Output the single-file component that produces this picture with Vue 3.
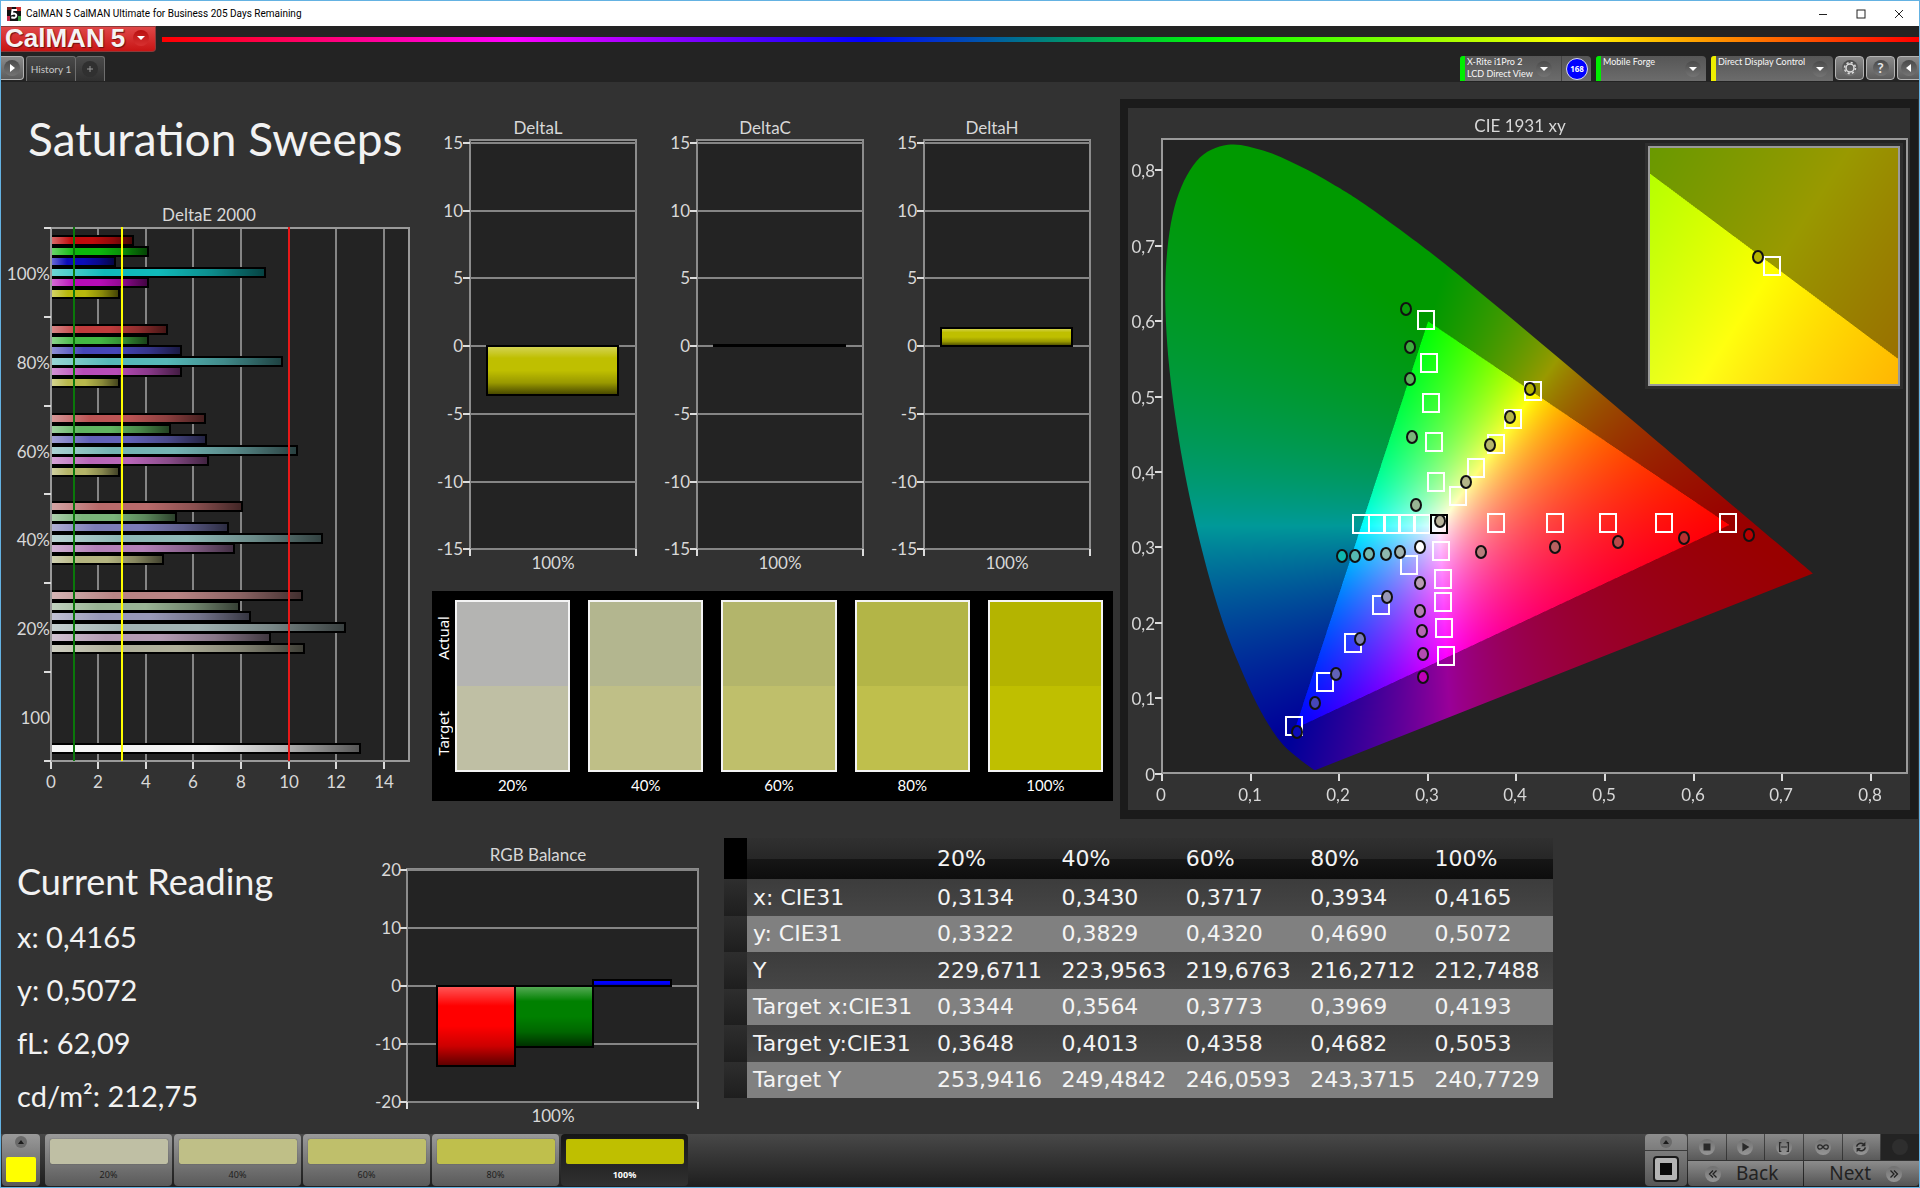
<script setup>
import { onMounted, ref } from 'vue'

const levels = ['20%', '40%', '60%', '80%', '100%']

/* DeltaE 2000 bar chart */
const deX = (v) => Math.round(50.5 + v * 23.8)
const deY = (i) => Math.round(228 + i * 88.8)
const slot = 10.6
const deltaE = [
  { label: '100%', values: [3.45, 4.1, 2.71, 9.03, 4.1, 2.89], colors: ['#c00c0c', '#0cb80c', '#0c0cb8', '#10baba', '#b80cb8', '#b8b80c'] },
  { label: '80%', values: [4.88, 4.1, 5.5, 9.71, 5.5, 2.88], colors: ['#c03c3c', '#44b844', '#4646b8', '#56b8b8', '#b84cb8', '#b8b84c'] },
  { label: '60%', values: [6.48, 5.02, 6.52, 10.34, 6.6, 2.89], colors: ['#bc5454', '#60b460', '#6262b8', '#74b4b4', '#b866b8', '#b4b468'] },
  { label: '40%', values: [8.06, 5.27, 7.46, 11.42, 7.71, 4.71], colors: ['#b86a6a', '#7ab47a', '#7c7cb8', '#8eb8b6', '#b480b8', '#b4b480'] },
  { label: '20%', values: [10.55, 7.92, 8.37, 12.39, 9.24, 10.64], colors: ['#b88484', '#98b494', '#9898b8', '#a0b2b2', '#b49cb4', '#b0b09a'] },
  { label: '100', values: [null, null, null, null, null, null, 12.99], colors: ['', '', '', '', '', '', '#f2f2f2'] },
]
const deBars = deltaE.flatMap((g, gi) =>
  g.values
    .map((v, i) => ({ v, y: Math.round(deY(gi) + 8 + i * slot), color: g.colors[i], key: gi + '-' + i }))
    .filter((b) => b.v !== null)
)

/* DeltaL / DeltaC / DeltaH charts */
const dY = (v) => Math.round(346 - v * 13.55)
const deltaTicks = [15, 10, 5, 0, -5, -10, -15]
const deltas = [
  { name: 'DeltaL', top: 0, bottom: -3.6 },
  { name: 'DeltaC', top: 0.1, bottom: 0 },
  { name: 'DeltaH', top: 1.3, bottom: 0 },
]

/* Colour swatches */
const swatches = [
  { label: '20%', actual: '#b4b4b2', target: '#bfbfa4' },
  { label: '40%', actual: '#b3b68f', target: '#bfbf87' },
  { label: '60%', actual: '#b3b56b', target: '#bfbf6b' },
  { label: '80%', actual: '#b3b547', target: '#bfbf4c' },
  { label: '100%', actual: '#b4b400', target: '#bfbf00' },
]

/* RGB balance */
const rY = (v) => Math.round(986 - v * 5.8)
const rgbBars = [
  { x: 437, top: 0, bottom: -13.8, color: '#ff0000' },
  { x: 515, top: 0, bottom: -10.6, color: '#008000' },
  { x: 593, top: 1, bottom: 0, color: '#0000ff' },
]

/* Readings */
const readings = ['x: 0,4165', 'y: 0,5072', 'fL: 62,09', 'cd/m²: 212,75']
const rows = [
  ['x: CIE31', '0,3134', '0,3430', '0,3717', '0,3934', '0,4165'],
  ['y: CIE31', '0,3322', '0,3829', '0,4320', '0,4690', '0,5072'],
  ['Y', '229,6711', '223,9563', '219,6763', '216,2712', '212,7488'],
  ['Target x:CIE31', '0,3344', '0,3564', '0,3773', '0,3969', '0,4193'],
  ['Target y:CIE31', '0,3648', '0,4013', '0,4358', '0,4682', '0,5053'],
  ['Target Y', '253,9416', '249,4842', '246,0593', '243,3715', '240,7729'],
]

/* CIE diagram */
const view = { x: 1128, y: 108, w: 782, h: 702 }
const cX = (v) => 1162 + v * 886
const cY = (v) => 773.5 - v * 754
const cieTicks = [0, 1, 2, 3, 4, 5, 6, 7, 8]
const tickText = (n) => (n ? '0,' + n : '0')
const targets = [
  [1426, 320], [1429, 363], [1431, 403], [1434, 442], [1436, 482],
  [1533, 391], [1513, 419], [1496, 444], [1476, 468], [1458, 496],
  [1361, 524], [1377, 524], [1392, 524], [1407, 524], [1422, 524],
  [1496, 523], [1555, 523], [1608, 523], [1664, 523], [1728, 523],
  [1441, 551], [1443, 579], [1443, 602], [1444, 628], [1446, 656],
  [1409, 565], [1381, 605], [1353, 643], [1325, 682], [1294, 726],
]
const measured = [
  [1406, 309, '#0a9a0a'], [1410, 347, '#3fae3f'], [1410, 379, '#5cb25c'], [1412, 437, '#7ab47a'], [1416, 505, '#98b494'],
  [1530, 389, '#b4b400'], [1510, 417, '#b4b548'], [1490, 445, '#b4b56b'], [1466, 482, '#b4b688'], [1440, 521, '#b8b49c'],
  [1420, 547, '#ffffff'],
  [1342, 556, '#10b8b0'], [1355, 556, '#56b8b0'], [1369, 554, '#74b8b0'], [1386, 554, '#8eb8b0'], [1400, 552, '#a0b4b0'],
  [1481, 552, '#b87c7c'], [1555, 547, '#b86060'], [1618, 542, '#b84848'], [1684, 538, '#b83030'], [1749, 535, '#b80000'],
  [1420, 583, '#b89cb4'], [1420, 611, '#b480b0'], [1422, 631, '#b466b0'], [1423, 654, '#b44cb0'], [1423, 677, '#c000b8'],
  [1387, 597, '#9898b8'], [1360, 639, '#7c7cb8'], [1336, 674, '#6262b8'], [1315, 703, '#4646b8'], [1297, 732, '#0c0cb8'],
]
const inset = { x: 1649, y: 147, w: 250, h: 238, cx: 0.4193, cy: 0.5053 }

const locus = [
  [0.1741, 0.005], [0.1714, 0.0051], [0.1644, 0.0109], [0.1566, 0.0177], [0.144, 0.0297], [0.1355, 0.0399],
  [0.1241, 0.0578], [0.1096, 0.0868], [0.0913, 0.1327], [0.0687, 0.2007], [0.0454, 0.295], [0.0235, 0.4127],
  [0.0082, 0.5384], [0.0039, 0.6548], [0.0139, 0.7502], [0.0389, 0.812], [0.0743, 0.8338], [0.1142, 0.8262],
  [0.1547, 0.8059], [0.1929, 0.7816], [0.2296, 0.7543], [0.3016, 0.6923], [0.3731, 0.6245], [0.4441, 0.5547],
  [0.5125, 0.4866], [0.5752, 0.4242], [0.627, 0.3725], [0.6658, 0.334], [0.6915, 0.3083], [0.719, 0.2809],
  [0.7347, 0.2653],
]

/* Brightest RGB colour with chromaticity (x, y); dimmed outside the gamut */
function chroma(x, y) {
  const X = x / y
  const Z = (1 - x - y) / y
  let c = [
    3.2406 * X - 1.5372 - 0.4986 * Z,
    -0.9689 * X + 1.8758 + 0.0415 * Z,
    0.0557 * X - 0.204 + 1.057 * Z,
  ]
  const dim = Math.min(...c) < 0 ? 0.6 : 1
  c = c.map((v) => Math.max(v, 0))
  const m = Math.max(...c)
  return c.map((v) => (v / m) * 255 * dim)
}

function field(w, h, toXY) {
  const k = 2
  const cv = document.createElement('canvas')
  cv.width = w * k
  cv.height = h * k
  const ctx = cv.getContext('2d')
  const img = ctx.createImageData(cv.width, cv.height)
  let o = 0
  for (let j = 0; j < cv.height; j++) {
    for (let i = 0; i < cv.width; i++) {
      const [x, y] = toXY(i / k, j / k)
      const c = chroma(x, Math.max(y, 0.001))
      img.data[o] = c[0]
      img.data[o + 1] = c[1]
      img.data[o + 2] = c[2]
      img.data[o + 3] = 255
      o += 4
    }
  }
  ctx.putImageData(img, 0, 0)
  return cv
}

const canvas = ref(null)
onMounted(() => {
  const ctx = canvas.value.getContext('2d')
  ctx.translate(-view.x, -view.y)
  ctx.fillStyle = '#232323'
  ctx.fillRect(1162, 139, 745, 634)

  const p = locus.map(([x, y]) => [cX(x), cY(y)])
  ctx.save()
  ctx.beginPath()
  ctx.moveTo(...p[0])
  for (let i = 0; i < p.length - 1; i++) {
    const a = p[Math.max(i - 1, 0)]
    const b = p[i]
    const c = p[i + 1]
    const d = p[Math.min(i + 2, p.length - 1)]
    ctx.bezierCurveTo(b[0] + (c[0] - a[0]) / 6, b[1] + (c[1] - a[1]) / 6, c[0] - (d[0] - b[0]) / 6, c[1] - (d[1] - b[1]) / 6, c[0], c[1])
  }
  ctx.closePath()
  ctx.clip()
  const main = field(664, 634, (i, j) => [i / 886, (634.5 - j) / 754])
  ctx.drawImage(main, 1162, 139, 664, 634)
  ctx.restore()

  ctx.fillStyle = '#2e2e2e'
  ctx.fillRect(inset.x - 4, inset.y - 4, inset.w + 8, inset.h + 8)
  const zoomed = field(inset.w, inset.h, (i, j) => [
    inset.cx + (i - inset.w / 2) / 5000,
    inset.cy - (j - inset.h / 2) / 4700,
  ])
  ctx.drawImage(zoomed, inset.x, inset.y, inset.w, inset.h)
})
</script>

<template>
  <div class="window">
    <header class="titlebar">
      <svg class="appicon" viewBox="0 0 14 14">
        <rect width="14" height="14" fill="#111" />
        <path d="M0 0h5v3H0z" fill="#7a1c1c" />
        <path d="M9 0h5v4H9z" fill="#d03030" />
        <path d="M0 9h3v5H0z" fill="#c22a4a" />
        <path d="M11 9h3v5h-3z" fill="#3aa044" />
        <path d="M10 3H5.500L5 7c3-1 4.500 0 4.300 2-.2 1.700-2.500 2.300-5 1.300" fill="none" stroke="#fff" stroke-width="2" />
      </svg>
      <span class="caption">CalMAN 5 CalMAN Ultimate for Business 205 Days Remaining</span>
      <div class="controls">
        <button aria-label="Minimize"><svg viewBox="0 0 10 10"><path d="M1 5.500h8" stroke="#222" /></svg></button>
        <button aria-label="Maximize"><svg viewBox="0 0 10 10"><rect x="1" y="1" width="8" height="8" fill="none" stroke="#222" /></svg></button>
        <button aria-label="Close"><svg viewBox="0 0 10 10"><path d="M1 1l8 8M9 1l-8 8" stroke="#222" /></svg></button>
      </div>
    </header>

    <div class="brandrow">
      <button class="logo">
        <span class="brand">CalMAN</span><span class="brand">5</span>
        <span class="round red"><svg viewBox="0 0 16 16"><path d="M4 6h8l-4 4z" fill="#fff" /></svg></span>
      </button>
      <div class="rainbow"></div>
    </div>

    <nav class="toolbar">
      <button class="square first" aria-label="Open panel">
        <span class="round"><svg viewBox="0 0 16 16"><path d="M6 4l5 4-5 4z" fill="#fff" /></svg></span>
      </button>
      <button class="tab">History 1</button>
      <button class="tab plus" aria-label="Add tab">
        <span class="round dark"><svg viewBox="0 0 16 16"><path d="M8 5v6M5 8h6" stroke="#999" /></svg></span>
      </button>
      <div class="spacer"></div>
      <div class="device meter">
        <i class="status green"></i>
        <span class="name">X-Rite i1Pro 2<br />LCD Direct View</span>
        <button class="round" aria-label="Meter menu"><svg viewBox="0 0 16 16"><path d="M4 6h8l-4 4z" fill="#fff" /></svg></button>
        <span class="badgebox"><span class="badge">168</span></span>
      </div>
      <div class="device source">
        <i class="status green"></i>
        <span class="name">Mobile Forge</span>
        <button class="round" aria-label="Source menu"><svg viewBox="0 0 16 16"><path d="M4 6h8l-4 4z" fill="#fff" /></svg></button>
      </div>
      <div class="device display">
        <i class="status yellow"></i>
        <span class="name">Direct Display Control</span>
        <button class="round" aria-label="Display menu"><svg viewBox="0 0 16 16"><path d="M4 6h8l-4 4z" fill="#fff" /></svg></button>
      </div>
      <div class="tools">
        <button class="square" aria-label="Settings">
          <span class="round"><svg viewBox="0 0 16 16"><circle cx="8" cy="8" r="4" fill="none" stroke="#ddd" stroke-width="1.500" /><circle cx="8" cy="8" r="5.500" fill="none" stroke="#ddd" stroke-width="1.500" stroke-dasharray="2.160 2.160" /></svg></span>
        </button>
        <button class="square help" aria-label="Help"><span class="round">?</span></button>
        <button class="square last" aria-label="Collapse">
          <span class="round"><svg viewBox="0 0 16 16"><path d="M10 4L5 8l5 4z" fill="#fff" /></svg></span>
        </button>
      </div>
    </nav>

    <main>
      <section class="upper">
        <div class="sweeps">
          <h1>Saturation Sweeps</h1>
          <svg class="chart" viewBox="1 200 431 600">
            <defs>
              <linearGradient id="shadeH" x1="0" x2="1" y1="0" y2="0">
                <stop offset="0" stop-color="#fff" stop-opacity=".4" />
                <stop offset=".25" stop-color="#fff" stop-opacity="0" />
                <stop offset=".5" stop-color="#000" stop-opacity="0" />
                <stop offset=".75" stop-color="#000" stop-opacity=".25" />
                <stop offset="1" stop-color="#000" stop-opacity=".65" />
              </linearGradient>
              <linearGradient id="shadeV" x1="0" x2="0" y1="0" y2="1">
                <stop offset="0" stop-color="#fff" stop-opacity=".35" />
                <stop offset=".25" stop-color="#fff" stop-opacity="0" />
                <stop offset=".5" stop-color="#000" stop-opacity="0" />
                <stop offset=".75" stop-color="#000" stop-opacity=".2" />
                <stop offset="1" stop-color="#000" stop-opacity=".65" />
              </linearGradient>
            </defs>
            <text x="209" y="221" text-anchor="middle">DeltaE 2000</text>
            <rect x="51" y="228" width="358" height="533" fill="#232323" />
            <line v-for="v in [2, 4, 6, 8, 10, 12, 14]" :key="v" :x1="deX(v)" :x2="deX(v)" y1="228" y2="761" class="grid" />
            <g v-for="b in deBars" :key="b.key">
              <rect x="51" :y="b.y" :width="deX(b.v) - 51" height="9" :fill="b.color" />
              <rect x="51" :y="b.y" :width="deX(b.v) - 51" height="9" fill="url(#shadeH)" stroke="#000" stroke-width="2" />
            </g>
            <rect x="51" y="228" width="358" height="533" class="frame" />
            <line v-for="i in 7" :key="i" x1="44" x2="51" :y1="deY(i - 1)" :y2="deY(i - 1)" class="tick" />
            <line v-for="v in [0, 2, 4, 6, 8, 10, 12, 14]" :key="'t' + v" :x1="deX(v)" :x2="deX(v)" y1="762" y2="769" class="tick" />
            <line :x1="deX(1)" :x2="deX(1)" y1="227" y2="761" stroke="#0a780a" stroke-width="2" />
            <line :x1="deX(3)" :x2="deX(3)" y1="227" y2="761" stroke="#ff0" stroke-width="2" />
            <line :x1="deX(10)" :x2="deX(10)" y1="227" y2="761" stroke="#e81818" stroke-width="2" />
            <text v-for="(g, i) in deltaE" :key="g.label + i" x="50" :y="deY(i) + 52" text-anchor="end">{{ g.label }}</text>
            <text v-for="v in [0, 2, 4, 6, 8, 10, 12, 14]" :key="'l' + v" :x="deX(v)" y="788" text-anchor="middle">{{ v }}</text>
          </svg>
        </div>

        <div class="middle">
          <div class="deltas">
            <svg v-for="d in deltas" :key="d.name" class="chart" viewBox="0 82 227 509">
              <text x="106" y="134" text-anchor="middle">{{ d.name }}</text>
              <rect x="38" y="140" width="166" height="409" class="plot" />
              <g v-for="t in deltaTicks" :key="t">
                <line x1="38" x2="204" :y1="dY(t)" :y2="dY(t)" class="grid" />
                <line x1="31" x2="38" :y1="dY(t)" :y2="dY(t)" class="tick" />
                <text x="31" :y="dY(t) + 6" text-anchor="end">{{ t }}</text>
              </g>
              <line x1="38" x2="38" y1="549" y2="556" class="tick" />
              <line x1="204" x2="204" y1="549" y2="556" class="tick" />
              <rect x="55" :y="dY(d.top)" width="131" :height="dY(d.bottom) - dY(d.top)" fill="#bfbf00" />
              <rect x="55" :y="dY(d.top)" width="131" :height="dY(d.bottom) - dY(d.top)" fill="url(#shadeV)" stroke="#000" stroke-width="2" />
              <text x="121" y="569" text-anchor="middle">100%</text>
            </svg>
          </div>
          <div class="swatches">
            <div class="side"><span>Actual</span><span>Target</span></div>
            <figure v-for="s in swatches" :key="s.label">
              <div class="sample">
                <div :style="{ background: s.actual }"></div>
                <div :style="{ background: s.target }"></div>
              </div>
              <figcaption>{{ s.label }}</figcaption>
            </figure>
          </div>
        </div>

        <div class="cie">
          <canvas ref="canvas" :width="view.w" :height="view.h"></canvas>
          <svg class="chart" :viewBox="`${view.x} ${view.y} ${view.w} ${view.h}`">
            <text x="1520" y="132" text-anchor="middle">CIE 1931 xy</text>
            <rect x="1162" y="139" width="745" height="634" class="frame" />
            <g v-for="n in cieTicks" :key="n">
              <line x1="1155" x2="1162" :y1="Math.round(cY(n / 10))" :y2="Math.round(cY(n / 10))" class="tick" />
              <line :x1="Math.round(cX(n / 10))" :x2="Math.round(cX(n / 10))" y1="774" y2="781" class="tick" />
              <text x="1155" :y="Math.round(cY(n / 10)) + 7" text-anchor="end">{{ tickText(n) }}</text>
              <text :x="Math.round(cX(n / 10)) - 1" y="801" text-anchor="middle">{{ tickText(n) }}</text>
            </g>
            <rect v-for="(t, i) in targets" :key="'s' + i" :x="t[0] - 8" :y="t[1] - 9" width="16" height="18" class="target" />
            <rect x="1431" y="515" width="16" height="18" class="target white" />
            <ellipse v-for="(m, i) in measured" :key="'m' + i" :cx="m[0]" :cy="m[1]" rx="5" ry="6" :fill="m[2]" class="dot" />
            <rect :x="inset.x" :y="inset.y" :width="inset.w" :height="inset.h" class="frame" />
            <rect x="1764" y="257" width="16" height="18" class="target" />
            <ellipse cx="1758" cy="257" rx="5" ry="6" fill="#b4b400" class="dot" />
          </svg>
        </div>
      </section>

      <section class="lower">
        <div class="reading">
          <h2>Current Reading</h2>
          <p v-for="r in readings" :key="r">{{ r }}</p>
        </div>

        <svg class="chart" viewBox="362 819 362 314">
          <text x="538" y="861" text-anchor="middle">RGB Balance</text>
          <rect x="407" y="869" width="291" height="233" class="plot" />
          <g v-for="t in [20, 10, 0, -10, -20]" :key="t">
            <line x1="407" x2="698" :y1="rY(t)" :y2="rY(t)" class="grid" />
            <line x1="400" x2="407" :y1="rY(t)" :y2="rY(t)" class="tick" />
            <text x="401" :y="rY(t) + 6" text-anchor="end">{{ t }}</text>
          </g>
          <line x1="407" x2="407" y1="1102" y2="1109" class="tick" />
          <line x1="698" x2="698" y1="1102" y2="1109" class="tick" />
          <g v-for="b in rgbBars" :key="b.color">
            <rect :x="b.x" :y="rY(b.top)" width="78" :height="rY(b.bottom) - rY(b.top)" :fill="b.color" />
            <rect :x="b.x" :y="rY(b.top)" width="78" :height="rY(b.bottom) - rY(b.top)" fill="url(#shadeV)" stroke="#000" stroke-width="2" />
          </g>
          <text x="553" y="1122" text-anchor="middle">100%</text>
        </svg>

        <table>
          <colgroup>
            <col class="c-mark" /><col class="c-label" /><col v-for="l in levels" :key="l" />
          </colgroup>
          <thead>
            <tr><td></td><td></td><th v-for="l in levels" :key="l" scope="col">{{ l }}</th></tr>
          </thead>
          <tbody>
            <tr v-for="r in rows" :key="r[0]">
              <td></td>
              <th scope="row">{{ r[0] }}</th>
              <td v-for="(v, i) in r.slice(1)" :key="i">{{ v }}</td>
            </tr>
          </tbody>
        </table>
      </section>
    </main>

    <footer>
      <button class="current" aria-label="Current pattern">
        <span class="up"><svg viewBox="0 0 12 12"><path d="M3 8l3-4 3 4z" fill="#1c1c1c" /></svg></span>
        <span class="color"></span>
      </button>
      <button v-for="s in swatches" :key="s.label" class="pattern" :class="{ active: s.label === '100%' }">
        <span class="color" :style="{ background: s.target }"></span>
        {{ s.label }}
      </button>
      <div class="spacer"></div>
      <div class="mode">
        <button aria-label="More"><span class="up"><svg viewBox="0 0 12 12"><path d="M3 8l3-4 3 4z" fill="#1c1c1c" /></svg></span></button>
        <button aria-label="Pattern window"><svg class="win" viewBox="0 0 26 26"><rect x="1" y="1" width="24" height="24" rx="3" fill="#b4b4b4" stroke="#1a1a1a" stroke-width="2" /><rect x="7" y="7" width="12" height="12" fill="#0a0a0a" /></svg></button>
      </div>
      <div class="transport">
        <div class="keys">
          <button aria-label="Stop"><span class="disc"><svg viewBox="0 0 16 16"><rect x="4" y="4" width="8" height="8" fill="#2a2a2a" /></svg></span></button>
          <button aria-label="Play"><span class="disc"><svg viewBox="0 0 16 16"><path d="M5 3l8 5-8 5z" fill="#2a2a2a" /></svg></span></button>
          <button aria-label="Range"><span class="disc"><svg viewBox="0 0 16 16"><path d="M5 3H3v10h2M11 3h2v10h-2" fill="none" stroke="#2a2a2a" stroke-width="1.500" /><path d="M5 8h6" stroke="#2a2a2a" stroke-width="1.500" stroke-dasharray="1.500 .75" /></svg></span></button>
          <button aria-label="Continuous"><span class="disc"><svg viewBox="0 0 16 16"><path d="M8 8C6.500 6 5.500 5.500 4.500 5.500a2.500 2.500 0 0 0 0 5C5.500 10.500 6.500 10 8 8s2.500-2.500 3.500-2.500a2.500 2.500 0 0 1 0 5C10.500 10.500 9.500 10 8 8z" fill="none" stroke="#2a2a2a" stroke-width="1.500" /></svg></span></button>
          <button aria-label="Repeat"><span class="disc"><svg viewBox="0 0 16 16"><path d="M3 7.500C3.500 4 8 2.500 11 5M13 8.500c-.5 3.500-5 5-8 2.500" fill="none" stroke="#2a2a2a" stroke-width="1.800" /><path d="M13 2v5H8zM3 14V9h5z" fill="#2a2a2a" /></svg></span></button>
          <button class="off" aria-label="Unavailable" disabled><span class="disc"></span></button>
        </div>
        <div class="steps">
          <button><span class="disc"><svg viewBox="0 0 16 16"><path d="M8 4L4 8l4 4M12 4L8 8l4 4" fill="none" stroke="#222" stroke-width="1.500" /></svg></span>Back</button>
          <button class="next">Next<span class="disc"><svg viewBox="0 0 16 16"><path d="M4 4l4 4-4 4M8 4l4 4-4 4" fill="none" stroke="#222" stroke-width="1.500" /></svg></span></button>
        </div>
      </div>
    </footer>
  </div>
</template>

<style>
body {
  margin: 0;
  background: #323232;
}
</style>

<style scoped>
.window {
  box-sizing: border-box;
  display: flex;
  flex-direction: column;
  min-height: 100vh;
  min-width: 1200px;
  border: 1px solid #64b2e2;
  background: #323232;
  color: #e6e6e6;
  font-family: Lato, "Liberation Sans", sans-serif;
}
.window * {
  box-sizing: border-box;
}
button {
  margin: 0;
  padding: 0;
  border: 0;
  background: none;
  color: inherit;
  font: inherit;
}
button svg,
span svg {
  display: block;
}
.spacer {
  flex: 1;
}

/* title bar */
.titlebar {
  display: flex;
  align-items: center;
  height: 25px;
  padding: 0 1px 0 6px;
  background: #fff;
  color: #000;
}
.appicon {
  width: 14px;
  height: 14px;
}
.caption {
  flex: 1;
  margin-left: 5px;
  padding-bottom: 1px;
  font-family: Roboto, sans-serif;
  font-size: 10px;
}
.controls {
  display: flex;
}
.controls button {
  display: grid;
  place-items: center;
  width: 38px;
  height: 24px;
}
.controls svg {
  width: 10px;
  height: 10px;
}

/* brand row */
.brandrow {
  display: flex;
  align-items: flex-start;
  height: 30px;
  gap: 6px;
  background: #232323;
}
.logo {
  display: flex;
  align-items: center;
  gap: 6px;
  width: 155px;
  height: 26px;
  padding: 0 0 3px 4px;
  border: 1px solid #8c3a3a;
  border-width: 1px 1px 1px 0;
  border-radius: 0 0 4px 0;
  background: linear-gradient(#e04848, #c81414);
  color: #f4f4f4;
  font-family: "Liberation Sans", Arial, sans-serif;
  font-size: 26px;
  font-weight: bold;
  line-height: 22px;
}
.brand {
  text-shadow: 1px 1px 1px #6a1010;
}
.round {
  display: grid;
  flex: none;
  place-items: center;
  width: 16px;
  height: 16px;
  border-radius: 50%;
  background: linear-gradient(#4a4a4a, #747474);
}
.round svg {
  width: 16px;
  height: 16px;
}
.round.red {
  margin-left: 2px;
  background: linear-gradient(#b81010, #d83030);
}
.round.dark {
  background: #303030;
}
.rainbow {
  flex: 1;
  height: 5px;
  margin-top: 11px;
  background: linear-gradient(90deg, #f00, #f0f 20%, #00f 40%, #0f0 60%, #ff0 80%, #f00);
}

/* toolbar */
.toolbar {
  display: flex;
  height: 26px;
  background: #232323;
  font-size: 10px;
}
.square {
  display: grid;
  place-items: center;
  width: 29px;
  height: 24px;
  border: 1px solid #b4b4b4;
  border-radius: 4px;
  background: linear-gradient(#8a8a8a, #5c5c5c);
}
.square.first {
  width: 23px;
  margin-right: 2px;
  border-left: 0;
  border-radius: 0 4px 4px 0;
}
.square.last {
  width: 22px;
  border-right: 0;
  border-radius: 4px 0 0 4px;
}
.square.help {
  font-size: 14px;
  font-weight: bold;
  line-height: 16px;
}
.tab {
  width: 50px;
  height: 25px;
  border: 1px solid #6e6e6e;
  border-bottom: 0;
  border-radius: 3px 3px 0 0;
  background: linear-gradient(#4a4a4a, #303030);
  color: #c8c8c8;
}
.tab.plus {
  display: grid;
  place-items: center;
  width: 29px;
  border-left: 0;
}
.device {
  display: flex;
  align-items: center;
  height: 25px;
  margin-right: 5px;
  padding-right: 5px;
  border-radius: 4px 4px 0 0;
  background: linear-gradient(#565656, #6c6c6c);
  color: #f8f8f8;
  line-height: 12px;
}
.device.meter {
  width: 131px;
  padding-right: 0;
}
.device.source {
  width: 110px;
}
.device.display {
  width: 122px;
  margin-right: 2px;
}
.status {
  flex: none;
  width: 5px;
  height: 25px;
  border-radius: 3px 0 0 0;
}
.status.green {
  background: #0e0;
}
.status.yellow {
  background: #ee0;
}
.name {
  flex: 1;
  align-self: flex-start;
  min-width: 0;
  padding-left: 2px;
  white-space: nowrap;
  font-size: 9px;
}
.badgebox {
  display: grid;
  place-items: center;
  width: 30px;
  height: 25px;
  margin-left: 9px;
  padding-left: 1px;
  border-left: 1px solid #444;
}
.badge {
  width: 22px;
  height: 22px;
  border: 1px solid #dde;
  border-radius: 50%;
  background: #00f;
  color: #fff;
  font-family: "Noto Sans", sans-serif;
  font-size: 8px;
  font-weight: bold;
  line-height: 20px;
  text-align: center;
}
.tools {
  display: flex;
  gap: 2px;
}

/* charts */
.chart {
  display: block;
  width: 100%;
  height: auto;
}
.chart text {
  fill: #d8d8d8;
  font-size: 17px;
}
.plot {
  fill: #232323;
  stroke: #8c8c8c;
  stroke-width: 2;
}
.frame {
  fill: none;
  stroke: #9a9a9a;
  stroke-width: 2;
}
.grid {
  stroke: #858585;
  stroke-width: 2;
}
.tick {
  stroke: #dcdcdc;
  stroke-width: 2;
}
.target {
  fill: none;
  stroke: #fff;
  stroke-width: 2;
}
.target.white {
  fill: #fff;
  fill-opacity: 0.5;
  stroke: #000;
}
.dot {
  stroke: #111;
  stroke-width: 2;
}

main {
  flex: 1;
  padding-right: 1px;
}
.upper {
  display: grid;
  grid-template-columns: 431fr 681fr 805fr;
  align-items: start;
}
h1,
h2,
p {
  margin: 0;
  font-weight: normal;
}
h1 {
  padding: 30px 0 34px 27px;
  color: #f2f2f2;
  font-size: 46px;
  line-height: 54px;
  white-space: nowrap;
}
.deltas {
  display: grid;
  grid-template-columns: repeat(3, 1fr);
}
.swatches {
  display: flex;
  gap: 18px;
  height: 210px;
  padding: 9px 10px 9px 3px;
  background: #000;
  color: #fff;
}
.side {
  display: flex;
  flex-direction: column;
  align-items: flex-start;
  justify-content: space-between;
  width: 20px;
  height: 172px;
  margin-right: -18px;
  padding: 16px 0;
  font-family: "Noto Sans", sans-serif;
  font-size: 15px;
  line-height: 16px;
}
.side span {
  writing-mode: vertical-rl;
  transform: rotate(180deg);
}
figure {
  flex: 1;
  margin: 0;
}
.sample {
  display: grid;
  height: 172px;
  border: 2px solid #f4f4f4;
}
figcaption {
  font-size: 15px;
  line-height: 26px;
  text-align: center;
}
.cie {
  display: grid;
  margin: 17px 0 0 7px;
  border: 9px solid #1b1b1b;
  border-width: 9px 8px;
}
.cie > * {
  grid-area: 1 / 1;
  width: 100%;
  height: auto;
}

.lower {
  display: grid;
  grid-template-columns: 361fr 362fr 829fr 365fr;
  align-items: start;
}
.reading {
  padding: 41px 0 0 16px;
  color: #f2f2f2;
}
h2 {
  margin-bottom: 8px;
  font-size: 36px;
  line-height: 42px;
}
.reading p {
  font-size: 29px;
  line-height: 53px;
}

table {
  width: 100%;
  margin-top: 19px;
  border-collapse: collapse;
  table-layout: fixed;
  color: #f4f4f4;
  font-family: "DejaVu Sans", sans-serif;
  font-size: 22px;
}
.c-mark {
  width: 23px;
}
.c-label {
  width: 184px;
}
th,
td {
  height: 36px;
  padding: 0 0 0 6px;
  font-weight: normal;
  line-height: 30px;
  text-align: left;
  white-space: nowrap;
}
thead th,
thead td {
  height: 41px;
  background: linear-gradient(#303030, #272727 50%, #161616 50%, #0d0d0d);
}
thead td:first-child {
  background: #000;
}
tbody tr {
  background: linear-gradient(#3c3c3c, #464646);
}
tbody tr:nth-child(odd) td {
  height: 37px;
}
tbody tr:nth-child(even) {
  background: #808080;
}
tbody td:first-child {
  background: linear-gradient(#2e2e2e, #1e1e1e);
}

/* footer */
footer {
  display: flex;
  align-items: stretch;
  height: 53px;
  padding: 0 0 1px 1px;
  background: linear-gradient(#484848, #1e1e1e);
}
.current {
  display: flex;
  flex-direction: column;
  align-items: center;
  justify-content: space-between;
  width: 38px;
  margin-right: 5px;
  padding: 2px 0 4px;
  border-radius: 4px;
  background: linear-gradient(#9a9a9a, #585858);
}
.up {
  display: block;
  width: 12px;
  height: 12px;
  border-radius: 50%;
  background: #6a6a6a;
}
.current .color {
  width: 30px;
  height: 25px;
  border-radius: 2px;
  background: #ff0;
}
.pattern {
  display: flex;
  flex-direction: column;
  align-items: center;
  width: 127px;
  margin-right: 2px;
  padding-top: 5px;
  border-radius: 4px;
  background: linear-gradient(#9a9a9a, #5a5a5a);
  color: #1e1e1e;
  font-family: "Noto Sans", sans-serif;
  font-size: 9px;
  line-height: 22px;
}
.pattern .color {
  width: 118px;
  height: 31px;
  border-radius: 2px;
  box-shadow: 0 0 1px #333;
}
.pattern.active {
  background: linear-gradient(#161616, #303030);
  color: #fff;
  font-weight: bold;
}
.mode {
  display: flex;
  flex-direction: column;
  width: 42px;
  margin-right: 1px;
}
.mode button {
  display: grid;
  place-items: center;
  height: 16px;
  border-radius: 4px 4px 0 0;
  background: linear-gradient(#8e8e8e, #7c7c7c);
}
.mode button + button {
  flex: 1;
  margin-top: 1px;
  border-radius: 0 0 4px 4px;
  background: linear-gradient(#7c7c7c, #565656);
}
.win {
  width: 26px;
  height: 26px;
}
.transport {
  display: flex;
  flex-direction: column;
  gap: 1px;
  width: 231px;
}
.keys,
.steps {
  display: grid;
  grid-template-columns: repeat(6, 1fr);
  gap: 1px;
}
.keys button {
  display: grid;
  place-items: center;
  height: 26px;
  background: linear-gradient(#8a8a8a, #5a5a5a);
}
.keys .off {
  background: #232323;
}
.keys .off .disc {
  background: #2e2e2e;
}
.disc {
  display: grid;
  place-items: center;
  width: 16px;
  height: 16px;
  border-radius: 50%;
  background: linear-gradient(#707070, #969696);
}
.disc svg {
  width: 14px;
  height: 14px;
}
.steps {
  grid-template-columns: 1fr 1fr;
}
.steps button {
  display: flex;
  align-items: center;
  gap: 15px;
  height: 25px;
  padding: 0 17px;
  border-radius: 0 0 0 4px;
  background: linear-gradient(#8c8c8c, #545454);
  color: #222;
  font-family: "Noto Sans", sans-serif;
  font-size: 19px;
  line-height: 25px;
}
.steps .next {
  justify-content: flex-end;
  border-radius: 0 0 4px 0;
}
</style>
